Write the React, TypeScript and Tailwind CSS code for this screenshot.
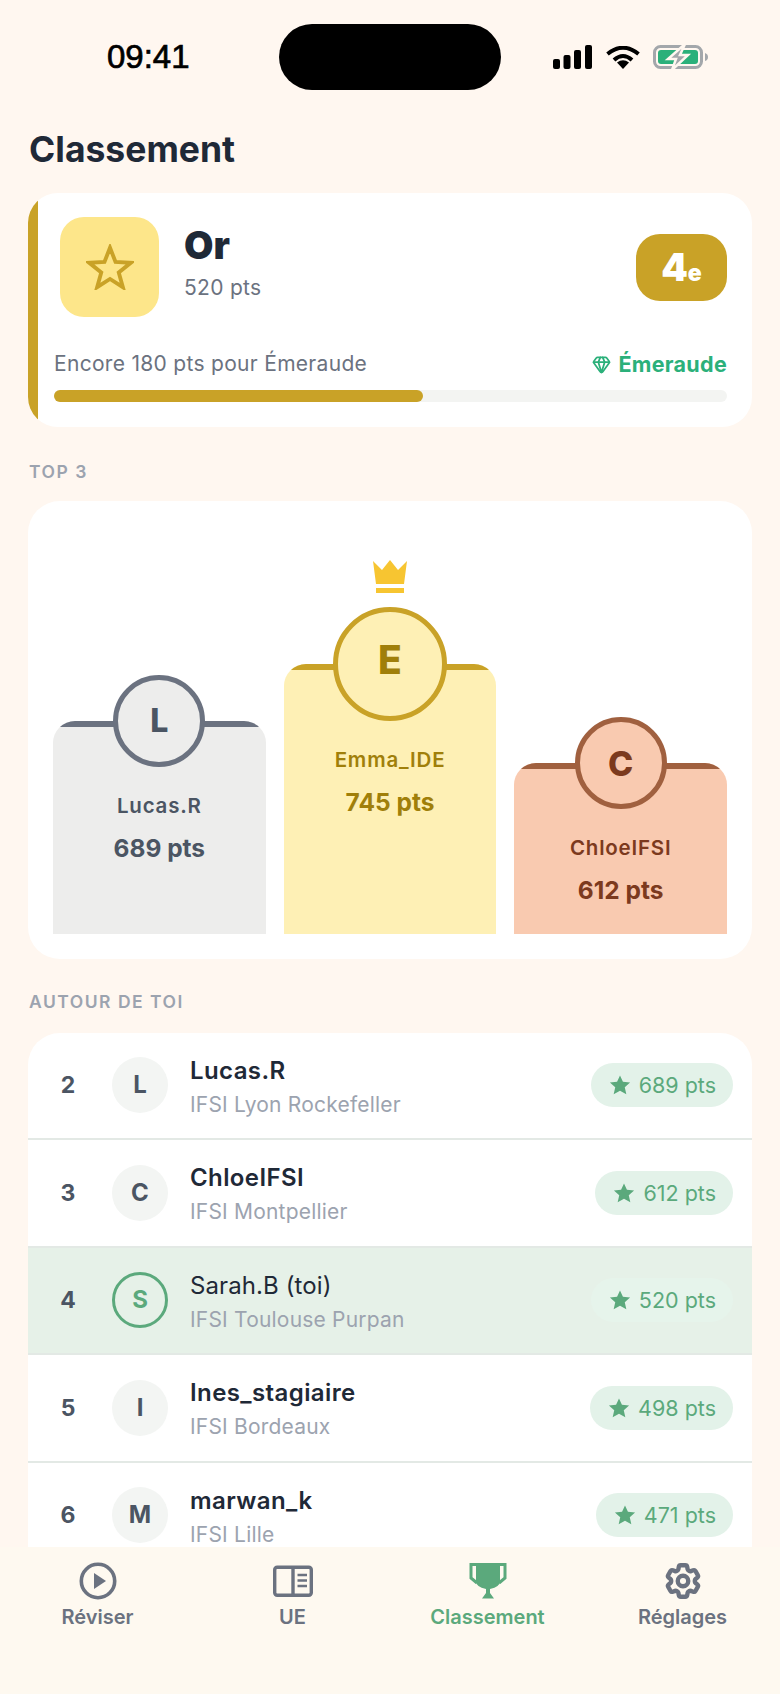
import { Gem } from 'lucide-react';
import { HiOutlineCog6Tooth } from 'react-icons/hi2';

const podium = [
  {
    initial: 'L',
    name: 'Lucas.R',
    pts: '689 pts',
    col: 'h-[213px]',
    bg: 'bg-[#EDEDEC]',
    strip: 'bg-[#6B7280]',
    pad: 'pt-[72px]',
    text: 'text-[#4B5563]',
    avatar: 'w-[92px] h-[92px] -top-[46px] bg-[#EDEDEC] border-[#6B7280] text-[32px]',
  },
  {
    initial: 'E',
    name: 'Emma_IDE',
    pts: '745 pts',
    col: 'h-[270px]',
    bg: 'bg-[#FEF0B5]',
    strip: 'bg-[#C9A227]',
    pad: 'pt-[83px]',
    text: 'text-[#A07F0A]',
    avatar: 'w-[114px] h-[114px] -top-[57px] pb-[8px] bg-[#FEF0B5] border-[#C9A227] text-[39px]',
  },
  {
    initial: 'C',
    name: 'ChloeIFSI',
    pts: '612 pts',
    col: 'h-[171px]',
    bg: 'bg-[#F9CAB0]',
    strip: 'bg-[#A0603F]',
    pad: 'pt-[72px]',
    text: 'text-[#7C3A1E]',
    avatar: 'w-[92px] h-[92px] -top-[46px] bg-[#F9CAB0] border-[#A0603F] text-[34px]',
  },
];

const rows = [
  { rank: 2, initial: 'L', name: 'Lucas.R', school: 'IFSI Lyon Rockefeller', pts: '689 pts' },
  { rank: 3, initial: 'C', name: 'ChloeIFSI', school: 'IFSI Montpellier', pts: '612 pts' },
  { rank: 4, initial: 'S', name: 'Sarah.B (toi)', school: 'IFSI Toulouse Purpan', pts: '520 pts', me: true },
  { rank: 5, initial: 'I', name: 'Ines_stagiaire', school: 'IFSI Bordeaux', pts: '498 pts' },
  { rank: 6, initial: 'M', name: 'marwan_k', school: 'IFSI Lille', pts: '471 pts' },
];

function StatusIcons() {
  return (
    <div className="flex items-center">
      <svg width="39" height="24" viewBox="0 0 39 24" fill="#000">
        <rect x="0" y="14" width="7" height="10" rx="2" />
        <rect x="10.5" y="10" width="7" height="14" rx="2" />
        <rect x="21" y="5" width="7" height="19" rx="2" />
        <rect x="32" y="0" width="7" height="24" rx="2" />
      </svg>
      <svg className="ml-[14px]" width="34" height="23" viewBox="0 0 34 23" fill="none" stroke="#000" strokeWidth="4">
        <path d="M1.5 8 Q17 -4.5 32.5 8" />
        <path d="M8 14 Q17 6 26 14" />
        <path d="M17 23 L11 16.5 Q17 12 23 16.5 Z" fill="#000" stroke="none" />
      </svg>
      <svg className="ml-[13px]" width="55" height="24" viewBox="0 0 55 24" fill="none">
        <rect x="1.5" y="1.5" width="47" height="21" rx="6" stroke="#A3A7AB" strokeWidth="3" />
        <rect x="5" y="5" width="40" height="14" rx="3" fill="#2BB07A" />
        <path d="M52 8 Q55 9 55 12 Q55 15 52 16 Z" fill="#A3A7AB" />
        <path d="M32 -1 L15 14 H23 L19 25 L35 10 H27 Z" fill="#A3A7AB" stroke="#FFF7F0" strokeWidth="2.5" />
      </svg>
    </div>
  );
}

function SmallStar() {
  return (
    <svg width="22" height="22" viewBox="0 0 24 24" fill="#5BA97C">
      <path d="M12 1.5l3.2 7 7.8.8-5.8 5.2 1.7 7.7L12 18.2l-6.9 4 1.7-7.7L1 9.3l7.8-.8z" />
    </svg>
  );
}

function NavIcon({ kind }: { kind: string }) {
  if (kind === 'play') {
    return (
      <svg width="38" height="38" viewBox="0 0 38 38" fill="none">
        <circle cx="19" cy="19" r="16.7" stroke="#6B7280" strokeWidth="3.6" />
        <path d="M15 11 L27 19 L15 27 Z" fill="#6B7280" />
      </svg>
    );
  }
  if (kind === 'book') {
    return (
      <svg width="40" height="38" viewBox="0 0 40 38" fill="none" stroke="#6B7280">
        <rect x="1.7" y="5.2" width="36.6" height="28" rx="2.5" strokeWidth="3.4" />
        <path d="M20 5 V33" strokeWidth="3.4" />
        <path d="M24.5 13 H34 M24.5 18.5 H34 M24.5 24 H34" strokeWidth="2.4" />
      </svg>
    );
  }
  if (kind === 'trophy') {
    return (
      <svg width="38" height="38" viewBox="0 0 38 38" fill="#5BA97C">
        <path d="M7 1 H31 V19 Q31 25 21 27 V31 L25 36.5 H13 L17 31 V27 Q7 25 7 19 Z" />
        <path d="M8 2.5 H2 V16 L8 21 M30 2.5 H36 V16 L30 21" fill="none" stroke="#5BA97C" strokeWidth="3" />
      </svg>
    );
  }
  return <HiOutlineCog6Tooth size={42} color="#6B7280" strokeWidth={2.5} />;
}

export default function App() {
  return (
    <div className="w-[780px] h-[1694px] flex flex-col overflow-hidden bg-[#FFF7F0] font-['Inter',sans-serif]">
      <div className="flex-1 min-h-0 overflow-hidden">
        {/* status bar */}
        <div className="h-[114px] pt-[24px] relative">
          <div className="h-[66px] flex items-center">
            <span className="ml-[107px] w-[172px] font-['Liberation_Sans',sans-serif] text-[33px] text-black [-webkit-text-stroke:0.7px_black]">09:41</span>
            <div className="w-[222px] h-[66px] rounded-full bg-black" />
            <div className="ml-[52px]">
              <StatusIcons />
            </div>
          </div>
        </div>

        <div className="h-[70px] mx-[29px] pt-[2px] flex items-center text-[35.5px] font-bold text-[#1F2937]">Classement</div>

        {/* rank card */}
        <div className="relative mt-[9px] mx-[28px] h-[234px] rounded-[30px] bg-white overflow-hidden pt-[24px] pl-[26px] pr-[25px]">
          <div className="absolute left-0 top-0 bottom-0 w-[10px] bg-[#C9A227]" />
          <div className="h-[100px] flex items-center pl-[6px]">
            <div className="w-[99px] h-[100px] rounded-[24px] bg-[#FDE68A] flex items-center justify-center">
              <svg width="48" height="46" viewBox="0 0 52 50" fill="none">
                <path d="M26 4 L32 19.5 L48.5 20.5 L35.5 31 L40 47 L26 38 L12 47 L16.5 31 L3.5 20.5 L20 19.5 Z" stroke="#C9A227" strokeWidth="4.2" />
              </svg>
            </div>
            <div className="ml-[25px] -mt-[8px]">
              <div className="text-[38px] leading-[46px] -mt-[2px] font-black text-[#1F2937]">Or</div>
              <div className="text-[21px] leading-[28px] mt-[6px] tracking-[0.3px] text-[#6B7280]">520 pts</div>
            </div>
            <div className="ml-auto w-[91px] h-[67px] rounded-[24px] bg-[#C9A227] flex items-baseline justify-center pt-[14px] text-white font-black">
              <span className="text-[38px] leading-[38px]">4</span>
              <span className="text-[23px] leading-[23px]">e</span>
            </div>
          </div>
          <div className="mt-[33px] h-[28px] flex items-center justify-between">
            <span className="text-[21px] tracking-[0.3px] text-[#6B7280]">Encore 180 pts pour Émeraude</span>
            <span className="flex items-center gap-[7px] text-[21.5px] font-bold tracking-[0.3px] text-[#2BB07A]">
              <Gem size={19} strokeWidth={2.2} />
              Émeraude
            </span>
          </div>
          <div className="mt-[12px] h-[12px] rounded-full bg-[#F3F4F2]">
            <div className="h-full w-[369px] rounded-full bg-[#C9A227]" />
          </div>
        </div>

        <div className="h-[74px] mx-[29px] flex items-center pt-[16px] text-[17.5px] font-semibold tracking-[1.5px] text-[#9CA3AF]">TOP 3</div>

        {/* podium */}
        <div className="mx-[28px] h-[458px] rounded-[32px] bg-white px-[25px] pb-[25px] flex items-end gap-[18px]">
          {podium.map((p) => (
            <div key={p.name} className={`relative flex-1 ${p.col} ${p.pad} ${p.text} text-center`}>
              <div className={`absolute inset-0 rounded-t-[22px] overflow-hidden ${p.bg}`}>
                <div className={`h-[6px] ${p.strip}`} />
              </div>
              {p.initial === 'E' && (
                <svg className="absolute -top-[104px] left-1/2 -translate-x-1/2" width="38" height="34" viewBox="0 0 36 34" fill="#F7C531">
                  <path d="M1 1 L10 10 L18 0 L26 10 L35 1 L32 24 H4 Z" />
                  <rect x="4" y="28" width="28" height="5" />
                </svg>
              )}
              <div className={`absolute left-1/2 -translate-x-1/2 rounded-full border-[5px] flex items-center justify-center font-extrabold ${p.avatar}`}>
                {p.initial}
              </div>
              <div className="relative text-[20.5px] leading-[26px] font-semibold tracking-[0.8px]">{p.name}</div>
              <div className="relative mt-[14px] text-[24.5px] leading-[30px] font-bold">{p.pts}</div>
            </div>
          ))}
        </div>

        <div className="h-[73.5px] mx-[29px] flex items-center pt-[13px] text-[17.5px] font-semibold tracking-[1.5px] text-[#9CA3AF]">AUTOUR DE TOI</div>

        {/* list */}
        <div className="mx-[28px] rounded-t-[32px] bg-white overflow-hidden">
          {rows.map((r) => (
            <div
              key={r.rank}
              className={`h-[107.5px] flex items-center border-b-2 border-[#E3E9E5] pl-[12px] pr-[19px] ${r.me ? 'bg-[#E6F1E8]' : ''}`}
            >
              <span className="w-[56px] text-center text-[23px] font-bold text-[#4B5563]">{r.rank}</span>
              <div
                className={`ml-[16px] w-[56px] h-[56px] rounded-full flex items-center justify-center text-[24px] font-bold ${
                  r.me ? 'border-[3px] border-[#5BA97C] text-[#5BA97C]' : 'bg-[#F3F5F3] text-[#4B5563]'
                }`}
              >
                {r.initial}
              </div>
              <div className="ml-[22px] mt-[4px]">
                <div className={`text-[24px] leading-[30px] text-[#1F2937] ${r.me ? 'font-normal tracking-[0.1px]' : 'font-semibold tracking-[0.4px]'}`}>{r.name}</div>
                <div className="mt-[5px] text-[21px] leading-[28px] tracking-[0.2px] text-[#9CA3AF]">{r.school}</div>
              </div>
              <div className={`ml-auto h-[44px] rounded-full pl-[18px] pr-[17px] flex items-center gap-[8px] text-[21.5px] text-[#5BA97C] ${r.me ? 'bg-[#E6F4EB]' : 'bg-[#E3F2E9]'}`}>
                <SmallStar />
                {r.pts}
              </div>
            </div>
          ))}
        </div>
      </div>

      {/* bottom nav */}
      <div className="h-[147px] shrink-0 bg-[#FEF9F0] grid grid-cols-4">
        {[
          { kind: 'play', label: 'Réviser' },
          { kind: 'book', label: 'UE' },
          { kind: 'trophy', label: 'Classement', active: true },
          { kind: 'gear', label: 'Réglages' },
        ].map((t) => (
          <div key={t.label} className="flex flex-col items-center pt-[15px]">
            <div className="h-[38px] flex items-center justify-center">
              <NavIcon kind={t.kind} />
            </div>
            <span className={`mt-[5px] text-[20px] leading-[24px] font-semibold ${t.active ? 'text-[#5BA97C]' : 'text-[#6B7280]'}`}>
              {t.label}
            </span>
          </div>
        ))}
      </div>
    </div>
  );
}
